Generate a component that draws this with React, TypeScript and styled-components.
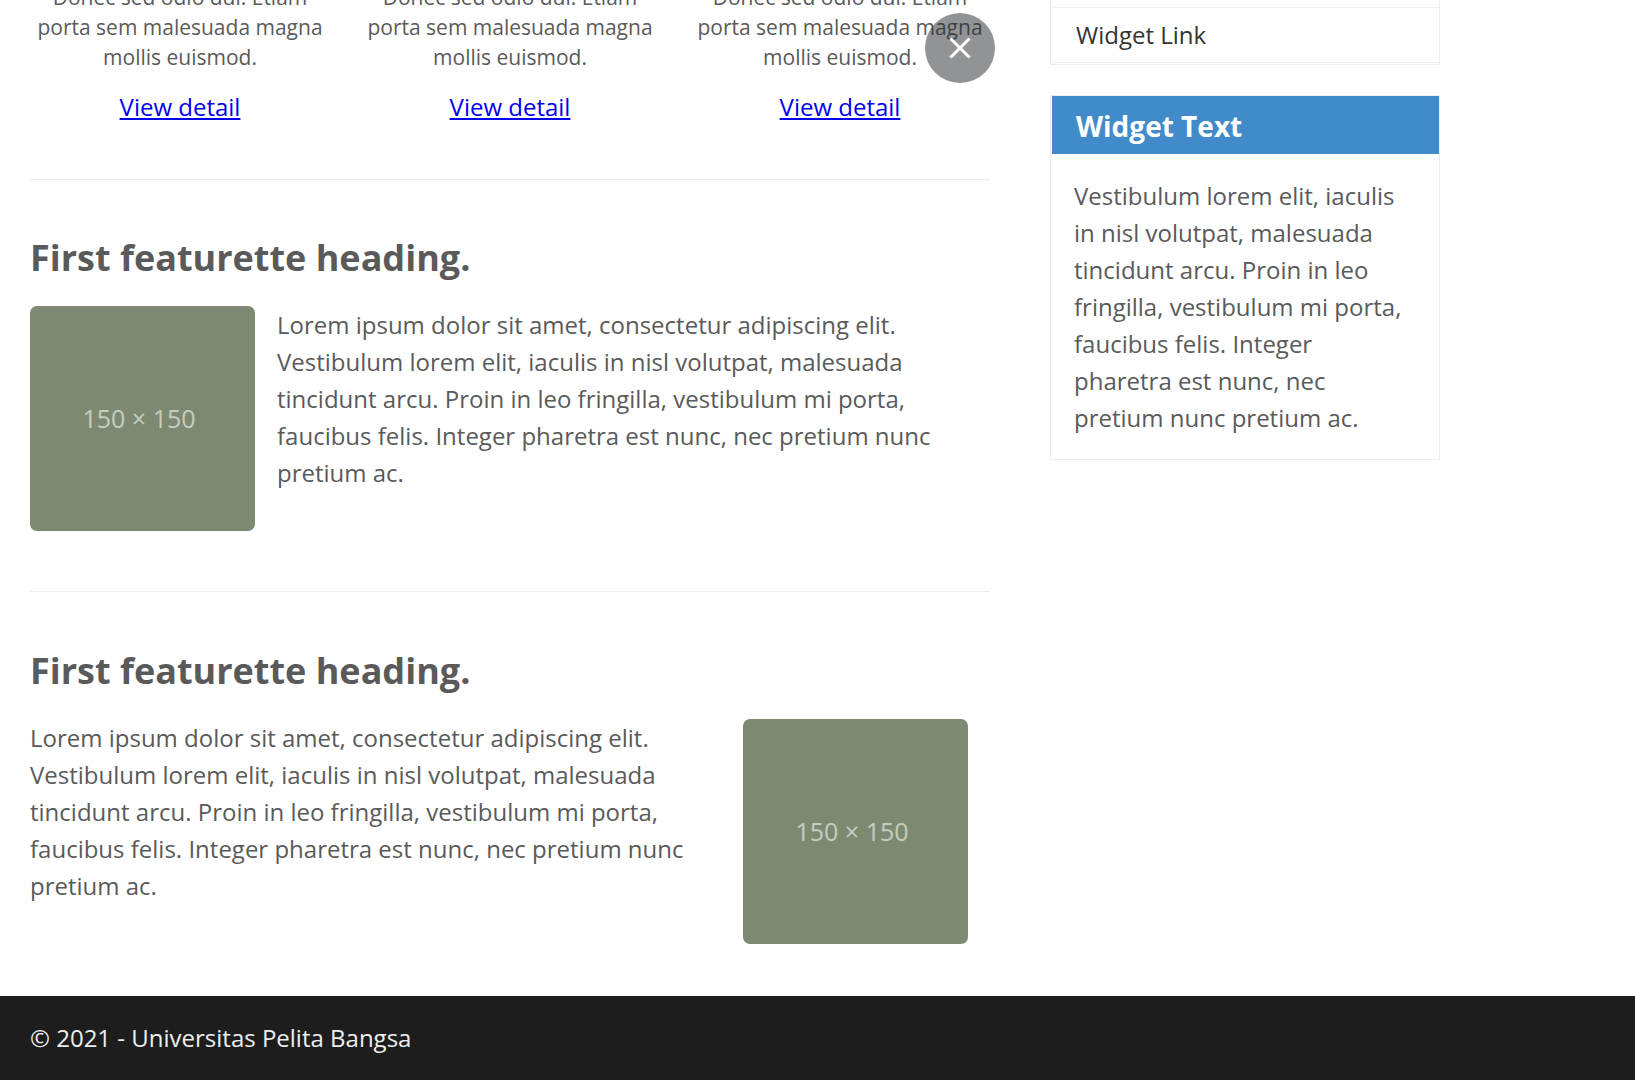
import React from "react";
import styled, { createGlobalStyle } from "styled-components";

const GlobalStyle = createGlobalStyle`
  * { box-sizing: border-box; }
  html { overflow-x: hidden; }
  body {
    margin: 0;
    background: #ffffff;
    color: #5a5a5a;
    font-family: "Open Sans", "Noto Sans", sans-serif;
    font-size: 24px;
    line-height: 37px;
  }
  h2, h3, p, ul { margin: 0; padding: 0; }
`;

const Page = styled.div`
  display: flow-root;
  overflow: hidden;
`;

const Container = styled.div`
  display: grid;
  grid-template-columns: minmax(0, 960px) minmax(0, 390px);
  column-gap: 60px;
  max-width: 1470px;
  padding: 0 30px;
  margin-top: -18px;
`;

const Boxes = styled.div`
  display: grid;
  grid-template-columns: repeat(3, 1fr);
  gap: 30px;
  text-align: center;
`;

const BoxText = styled.p`
  font-size: 21px;
  line-height: 30px;
`;

const DetailLink = styled.a`
  display: inline-block;
  margin-top: 16px;
  color: #0000ee;
`;

const Divider = styled.hr`
  height: 1px;
  margin: 54px 0 60px;
  border: 0;
  background: #eeeeee;
`;

const FeatureDivider = styled(Divider)`
  margin: 60px 0 61px;
`;

const Heading = styled.h2`
  margin-bottom: 30px;
  font-size: 36px;
  line-height: 36px;
`;

const Feature = styled.div<{ $reverse?: boolean }>`
  display: flex;
  flex-direction: ${(p) => (p.$reverse ? "row-reverse" : "row")};
  justify-content: space-between;
  gap: 22px;
  padding-right: ${(p) => (p.$reverse ? "22px" : "0")};
`;

const Thumb = styled.div`
  display: grid;
  place-items: center;
  flex: none;
  width: 225px;
  height: 225px;
  padding-right: 7px;
  border-radius: 7px;
  background: #7d8a71;
  color: #c6cdc0;
  font-size: 25px;
`;

const FeatureText = styled.p`
  flex: 1;
`;

const Sidebar = styled.aside`
  display: flex;
  flex-direction: column;
  gap: 30px;
`;

const Widget = styled.section`
  padding-left: 1px;
  border: 1px solid #eeeeee;
`;

const WidgetList = styled.ul`
  padding: 24px 0 1px;
  list-style: none;
`;

const WidgetItem = styled.li`
  border: solid #eeeeee;
  border-width: 1px 0;
`;

const WidgetLink = styled.a`
  display: block;
  padding: 8px 24px 9px;
  color: #333333;
  text-decoration: none;
`;

const WidgetTitle = styled.h3`
  padding: 12px 24px 9px;
  background: #428bca;
  color: #ffffff;
  font-size: 28px;
  line-height: 37px;
`;

const WidgetText = styled.p`
  padding: 23px 24px 23px 22px;
`;

const Footer = styled.footer`
  margin-top: 52px;
  padding: 23px 30px 24px;
  background: #1d1d1d;
  color: #eeeeee;
`;

const CloseButton = styled.button`
  position: absolute;
  top: 13px;
  left: 925px;
  display: grid;
  place-items: center;
  width: 70px;
  height: 70px;
  padding: 0;
  border: 0;
  border-radius: 50%;
  background: rgba(37, 39, 44, 0.5);
  color: #ffffff;
`;

const boxes = ["first", "second", "third"];

function Placeholder() {
  return <Thumb>150 × 150</Thumb>;
}

function FeatureCopy() {
  return (
    <FeatureText>
      Lorem ipsum dolor sit amet, consectetur adipiscing elit. Vestibulum lorem elit, iaculis in nisl
      volutpat, malesuada tincidunt arcu. Proin in leo fringilla, vestibulum mi porta, faucibus felis.
      Integer pharetra est nunc, nec pretium nunc pretium ac.
    </FeatureText>
  );
}

export default function App() {
  return (
    <>
      <GlobalStyle />
      <Page>
        <Container>
          <main>
            <Boxes>
              {boxes.map((id) => (
                <div key={id}>
                  <BoxText>Donec sed odio dui. Etiam porta sem malesuada magna mollis euismod.</BoxText>
                  <DetailLink href="#">View detail</DetailLink>
                </div>
              ))}
            </Boxes>
            <Divider />
            <Heading>First featurette heading.</Heading>
            <Feature>
              <Placeholder />
              <FeatureCopy />
            </Feature>
            <FeatureDivider />
            <Heading>First featurette heading.</Heading>
            <Feature $reverse>
              <Placeholder />
              <FeatureCopy />
            </Feature>
          </main>
          <Sidebar>
            <Widget>
              <WidgetList>
                <WidgetItem>
                  <WidgetLink href="#">Widget Link</WidgetLink>
                </WidgetItem>
              </WidgetList>
            </Widget>
            <Widget>
              <WidgetTitle>Widget Text</WidgetTitle>
              <WidgetText>
                Vestibulum lorem elit, iaculis in nisl volutpat, malesuada tincidunt arcu. Proin in leo
                fringilla, vestibulum mi porta, faucibus felis. Integer pharetra est nunc, nec pretium nunc
                pretium ac.
              </WidgetText>
            </Widget>
          </Sidebar>
        </Container>
        <Footer>© 2021 - Universitas Pelita Bangsa</Footer>
      </Page>
      <CloseButton type="button" aria-label="Close">
        <svg width="22" height="22" viewBox="0 0 22 22" fill="none" stroke="currentColor" strokeWidth="3">
          <path d="M1.5 1.5 20.5 20.5M20.5 1.5 1.5 20.5" />
        </svg>
      </CloseButton>
    </>
  );
}
